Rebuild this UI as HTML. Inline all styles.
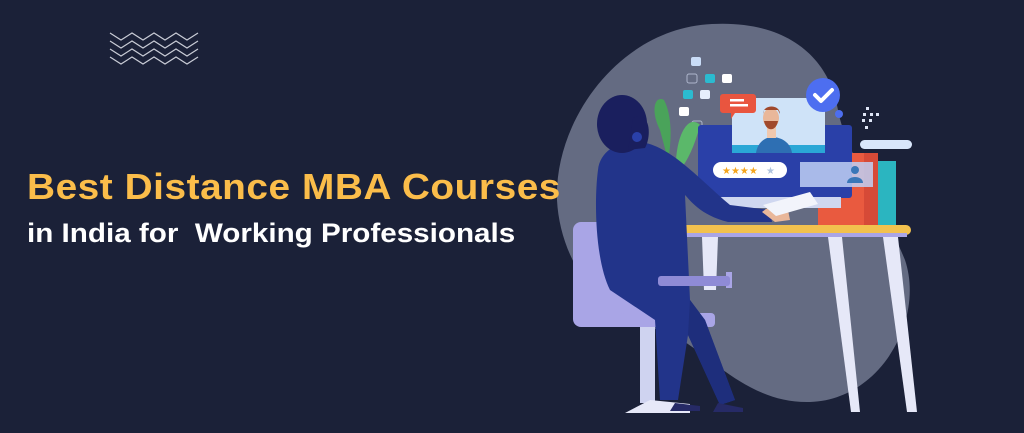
<!DOCTYPE html>
<html><head><meta charset="utf-8"><style>
html,body{margin:0;padding:0;}
body{width:1024px;height:433px;background:#1b2138;position:relative;overflow:hidden;font-family:"Liberation Sans",sans-serif;}
.t1{position:absolute;left:27px;top:166px;font-size:36px;font-weight:bold;color:#fbbd4a;letter-spacing:0.5px;white-space:nowrap;transform:scaleX(1.078);transform-origin:left top;}
.t2{position:absolute;left:27px;top:218px;font-size:27px;font-weight:bold;color:#fff;white-space:nowrap;transform:scaleX(1.097);transform-origin:left top;}
svg{position:absolute;left:0;top:0;}
</style></head><body>
<svg width="1024" height="433" viewBox="0 0 1024 433">
<g fill="none" stroke="#c9ccd6" stroke-width="1.2">
<path d="M110 33 l11 7 l11 -7 l11 7 l11 -7 l11 7 l11 -7 l11 7 l11 -7"/>
<path d="M110 41 l11 7 l11 -7 l11 7 l11 -7 l11 7 l11 -7 l11 7 l11 -7"/>
<path d="M110 49 l11 7 l11 -7 l11 7 l11 -7 l11 7 l11 -7 l11 7 l11 -7"/>
<path d="M110 57 l11 7 l11 -7 l11 7 l11 -7 l11 7 l11 -7 l11 7 l11 -7"/>
</g>
<path d="M712 24 C790 20 830 60 838 110 C845 150 880 200 905 260 C925 320 880 400 810 402 C740 404 700 340 660 330 C600 320 560 260 557 200 C554 120 620 28 712 24 Z" fill="#646b82"/>
<rect x="691" y="57" width="10" height="9" rx="2" fill="#c9dcf7"/>
<rect x="687" y="74" width="10" height="9" rx="2" fill="none" stroke="#aeb6cc" stroke-width="1"/>
<rect x="705" y="74" width="10" height="9" rx="2" fill="#2bbbd0"/>
<rect x="722" y="74" width="10" height="9" rx="2" fill="#fff"/>
<rect x="683" y="90" width="10" height="9" rx="2" fill="#2bbbd0"/>
<rect x="700" y="90" width="10" height="9" rx="2" fill="#e6eefc"/>
<rect x="679" y="107" width="10" height="9" rx="2" fill="#fff"/>
<rect x="692" y="121" width="10" height="9" rx="2" fill="none" stroke="#aeb6cc" stroke-width="1"/>
<g fill="#dfe6f7"><rect x="866" y="107" width="3" height="3"/><rect x="863" y="113" width="3" height="3"/><rect x="870" y="113" width="3" height="3"/><rect x="876" y="113" width="3" height="3"/><rect x="862" y="119" width="3" height="3"/><rect x="869" y="119" width="3" height="3"/><rect x="865" y="126" width="3" height="3"/></g>
<path d="M660 130 C650 110 655 95 664 100 C672 115 672 140 668 160 Z" fill="#4aa35a"/>
<path d="M676 160 C678 130 690 115 700 125 C695 145 688 160 680 170 Z" fill="#5bb86a"/>
<rect x="818" y="153" width="60" height="72" fill="#e95a3f"/>
<rect x="864" y="153" width="14" height="72" fill="#d64a37"/>
<rect x="878" y="161" width="18" height="64" fill="#2bb5c0"/>
<rect x="860" y="140" width="52" height="9" rx="4.5" fill="#d9e6fb"/>
<rect x="698" y="125" width="154" height="73" rx="3" fill="#2a40a8"/>
<rect x="698" y="197" width="143" height="11" fill="#cfd7f0"/>
<rect x="732" y="98" width="93" height="55" fill="#cfe3f8"/>
<rect x="732" y="145" width="93" height="8" fill="#2aa7d6"/>
<path d="M756 153 C758 140 768 137 772 137 C778 137 790 140 792 153 Z" fill="#2e6fb3"/>
<rect x="767" y="126" width="9" height="12" fill="#f0c8ae"/>
<ellipse cx="771" cy="118" rx="8" ry="10" fill="#e9b79a"/>
<path d="M763 114 C763 104 780 104 780 114 L778 110 L764 110 Z" fill="#a0492c"/>
<path d="M764 121 C766 132 776 132 778 121 Z" fill="#a0492c"/>
<path d="M723 94 h30 a3 3 0 0 1 3 3 v13 a3 3 0 0 1 -3 3 h-18 l-4 6 v-6 h-8 a3 3 0 0 1 -3 -3 v-13 a3 3 0 0 1 3 -3 Z" fill="#e9553f"/>
<rect x="730" y="99" width="14" height="2.5" fill="#fff"/><rect x="730" y="104" width="18" height="2.5" fill="#fff"/>
<circle cx="823" cy="95" r="17" fill="#4d6ef0"/>
<path d="M815 95 l6 6 l11 -11" stroke="#fff" stroke-width="4" fill="none" stroke-linecap="round" stroke-linejoin="round"/>
<circle cx="839" cy="114" r="4" fill="#4d6ef0"/>
<rect x="713" y="162" width="74" height="16" rx="8" fill="#fff"/>
<g fill="#f4a51d" font-size="10" font-family="DejaVu Sans"><text x="722" y="174">★★★★</text></g>
<text x="766" y="174" fill="#b0c4de" font-size="10" font-family="DejaVu Sans">★</text>
<rect x="800" y="162" width="73" height="25" fill="#bfd0f5" opacity="0.85"/>
<circle cx="855" cy="170" r="4" fill="#3a77b8"/><path d="M847 183 c0 -8 16 -8 16 0 Z" fill="#3a77b8"/>
<rect x="672" y="225" width="239" height="10" rx="5" fill="#f2c14e"/>
<rect x="672" y="233" width="235" height="4" fill="#a9a5e6"/>
<polygon points="702,237 718,237 716,290 704,290" fill="#e6e8f8"/>
<polygon points="828,237 842,237 860,412 851,412" fill="#e6e8f8"/>
<polygon points="883,237 898,237 917,412 907,412" fill="#e6e8f8"/>
<rect x="573" y="222" width="94" height="105" rx="8" fill="#a9a5e6"/>
<rect x="640" y="327" width="15" height="76" fill="#cfd3f0"/>
<polygon points="625,413 690,413 690,404 650,400" fill="#e6e8f8"/>
<rect x="620" y="313" width="95" height="14" rx="4" fill="#a9a5e6"/>
<path d="M598 170 C600 150 620 140 640 142 C670 145 700 180 730 205 L770 210 L772 222 L728 222 C700 215 690 200 685 195 L690 300 L705 320 L735 400 L720 405 L688 335 L678 400 L660 400 L655 320 L610 290 C595 260 594 200 598 170 Z" fill="#22348a"/>
<path d="M690 300 L705 320 L735 400 L720 405 L688 335 Z" fill="#1e2e7c"/>
<path d="M675 403 l25 3 l0 5 l-30 0 Z M718 403 l25 5 l0 4 l-30 0 Z" fill="#262a66"/>
<path d="M762 212 C770 205 782 203 788 210 L790 220 L775 222 Z" fill="#e9b79a"/>
<polygon points="763,205 810,192 818,204 776,216" fill="#f2f4fb"/>
<ellipse cx="622" cy="124" rx="25" ry="29" fill="#1a1f5e"/>
<path d="M633 118 C650 110 652 135 645 148 L628 150 Z" fill="#1a1f5e"/>
<circle cx="637" cy="137" r="5" fill="#2a40a8"/>
<rect x="726" y="272" width="6" height="16" fill="#a9a5e6"/>
<rect x="658" y="276" width="72" height="10" rx="3" fill="#8f8bd6"/>
</svg>
<div class="t1">Best Distance MBA Courses</div>
<div class="t2">in India for&nbsp; Working Professionals</div>
</body></html>
